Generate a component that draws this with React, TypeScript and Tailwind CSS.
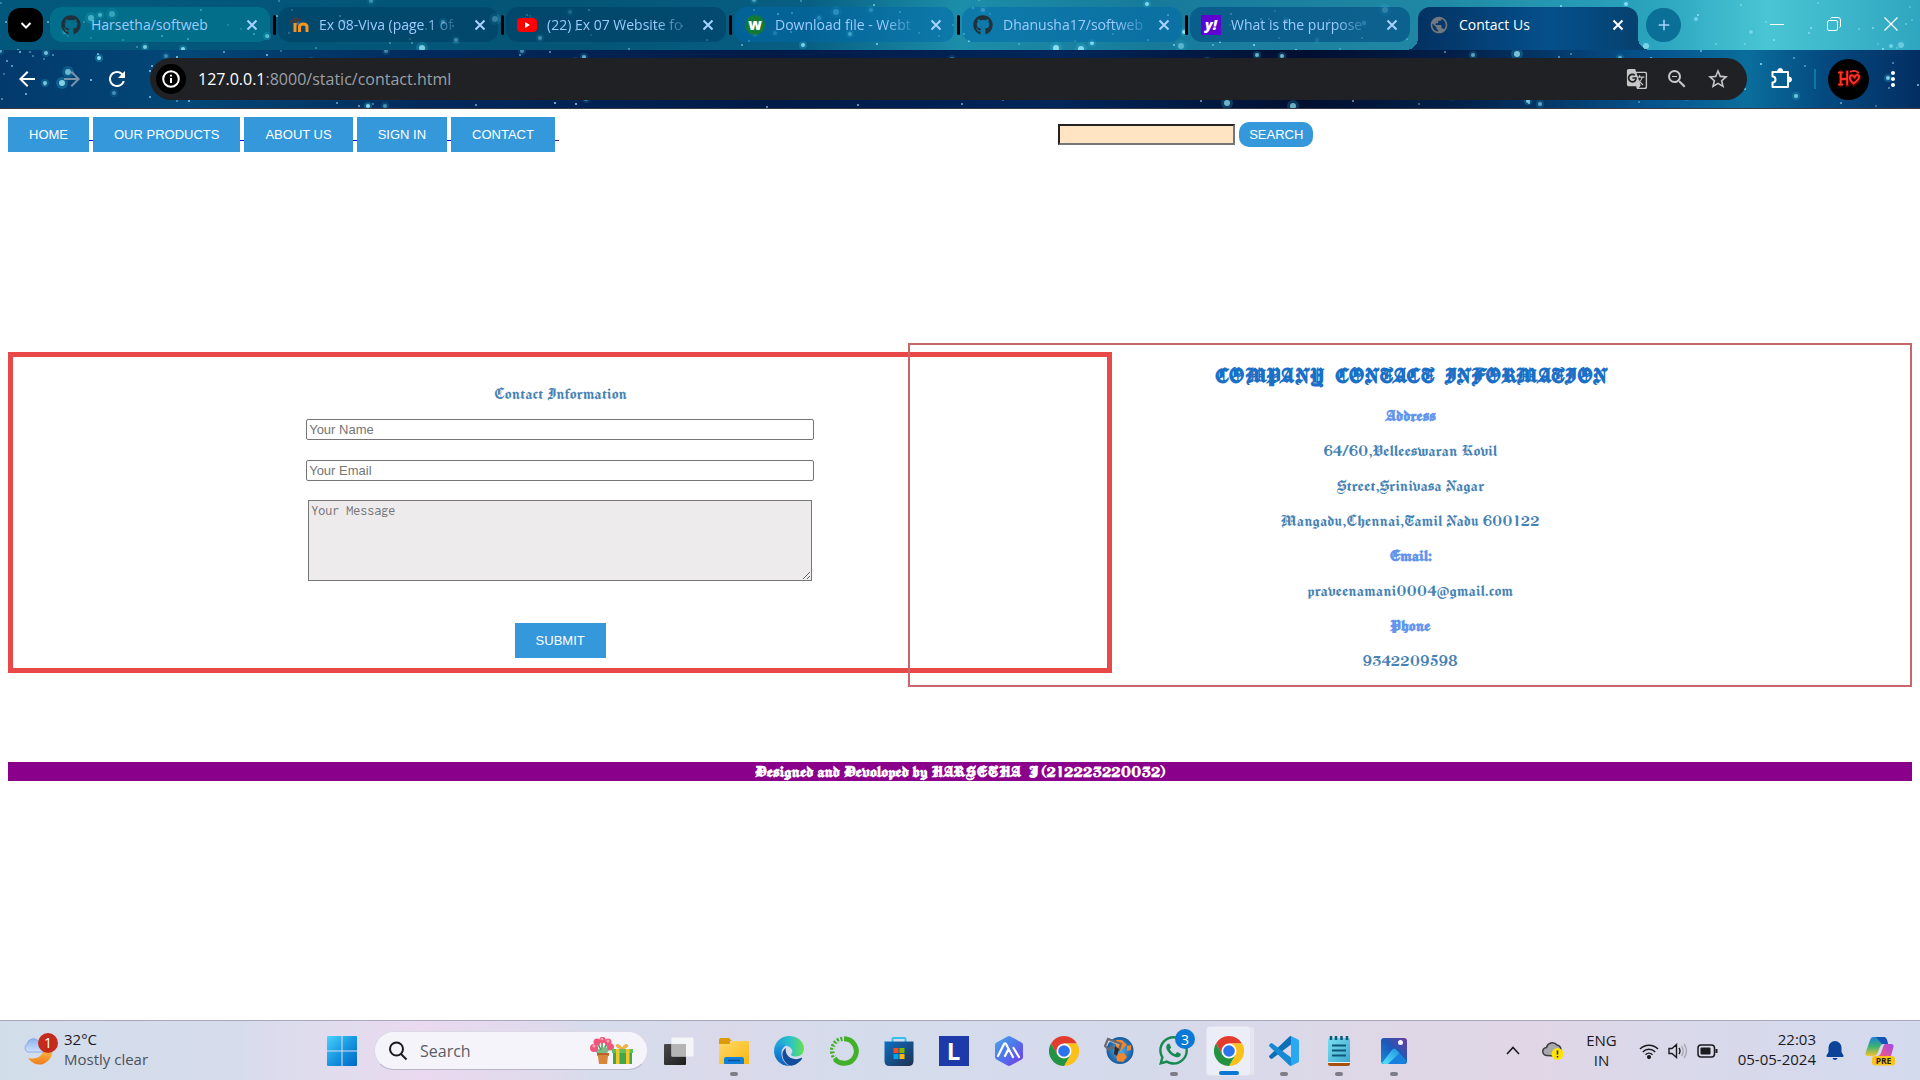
import type { ReactNode } from "react";
import { FaGithub, FaWhatsapp } from "react-icons/fa";
import {
  MdArrowBack,
  MdArrowForward,
  MdRefresh,
  MdAdd,
  MdPublic,
  MdGTranslate,
  MdZoomOut,
  MdStarBorder,
  MdMoreVert,
} from "react-icons/md";

type Star = { x: number; y: number; r: number; o: number };

function makeStars(seed: number, count: number, height: number): Star[] {
  let s = seed;
  const next = () => {
    s = (s * 1664525 + 1013904223) % 4294967296;
    return s / 4294967296;
  };
  return Array.from({ length: count }, () => {
    const big = next();
    return {
      x: Math.round(next() * 1920),
      y: Math.round(next() * height),
      r: big > 0.93 ? 3 : big > 0.7 ? 2 : 1,
      o: 0.35 + next() * 0.6,
    };
  });
}

const stripStars = makeStars(11, 150, 50);
const barStars = makeStars(29, 170, 58);

function Stars({ stars, height }: { stars: Star[]; height: number }) {
  return (
    <svg
      className="pointer-events-none absolute inset-0 h-full w-full"
      viewBox={`0 0 1920 ${height}`}
      preserveAspectRatio="xMidYMid slice"
      aria-hidden="true"
    >
      {stars.map((p, i) => (
        <g key={i}>
          {p.r > 1 && <circle cx={p.x} cy={p.y} r={p.r * 2} fill="#2fb4dc" opacity={p.o * 0.35} />}
          <circle cx={p.x} cy={p.y} r={p.r} fill="#9be8f5" opacity={p.o} />
        </g>
      ))}
    </svg>
  );
}

function CloseIcon() {
  return (
    <svg viewBox="0 0 18 18" className="size-[18px]" stroke="currentColor" strokeWidth="2">
      <path d="M4.500 4.500l9 9M13.500 4.500l-9 9" />
    </svg>
  );
}

function MoodleIcon() {
  return (
    <svg viewBox="0 0 20 20" className="size-5">
      <path d="M6 17V8M10.500 17v-5c0-4 7.500-4 7.500 0v5" fill="none" stroke="#f7931e" strokeWidth="3" />
      <path d="M0 6l7-4 6 2-5 4-6-.5z" fill="#3c3c46" />
      <path d="M1 6.500v5" stroke="#3c3c46" strokeWidth="1" />
    </svg>
  );
}

function YoutubeIcon() {
  return (
    <svg viewBox="0 0 20 20" className="size-5">
      <rect y="3" width="20" height="14" rx="4" fill="#f00" />
      <path d="M8 7l5 3-5 3z" fill="#fff" />
    </svg>
  );
}

function ExtensionIcon() {
  return (
    <svg viewBox="0 0 24 24" className="size-6" fill="none" stroke="currentColor" strokeWidth="2" strokeLinejoin="round">
      <path d="M3.500 5h15.500v15H3.500v-4.500c4 0 4-6 0-6z" />
      <path d="M8.700 4a2.500 2.500 0 0 1 5 0zM20 10a2.500 2.500 0 0 1 0 5z" fill="currentColor" strokeWidth="1" />
    </svg>
  );
}

function LetterIcon({ children, className }: { children: string; className: string }) {
  return <span className={`flex size-5 shrink-0 items-center justify-center font-extrabold leading-5 text-white ${className}`}>{children}</span>;
}

const tabs: { title: string; icon: ReactNode }[] = [
  { title: "Harsetha/softweb", icon: <FaGithub className="size-5 shrink-0 text-[#22303a]" /> },
  { title: "Ex 08-Viva (page 1 of", icon: <MoodleIcon /> },
  { title: "(22) Ex 07 Website fo", icon: <YoutubeIcon /> },
  { title: "Download file - Webt", icon: <LetterIcon className="rounded-full bg-[#127a36] pb-[2px] text-[15px]">w</LetterIcon> },
  { title: "Dhanusha17/softweb", icon: <FaGithub className="size-5 shrink-0 text-[#22303a]" /> },
  { title: "What is the purpose", icon: <LetterIcon className="bg-[#5f01d1] text-[14px] italic">y!</LetterIcon> },
];

function TabStrip() {
  return (
    <div className="relative flex h-[50px] items-start overflow-hidden bg-[linear-gradient(90deg,#02587c_0%,#045576_30%,#075f83_42%,#1c8eaa_50%,#177a9b_60%,#1f87a3_74%,#2aa3bd_86%,#49c5d4_92%,#2fa6bf_100%)] pl-2 pt-[7px]">
      <Stars stars={stripStars} height={50} />
      <button aria-label="Search tabs" className="relative mr-[7px] mt-px flex h-[34px] w-[35px] shrink-0 items-center justify-center rounded-xl bg-black text-white">
        <svg viewBox="0 0 12 12" className="size-3" fill="none" stroke="currentColor" strokeWidth="2">
          <path d="M1.500 4L6 8.500 10.500 4" />
        </svg>
      </button>
      {tabs.map((tab, i) => (
        <div key={tab.title} className="relative flex w-[228px] shrink items-center">
          <div className={`flex h-[35px] w-[220px] min-w-0 items-center rounded-xl pl-[11px] pr-[9px] ${i === 0 ? "bg-[#008a9e]/45" : i < 3 ? "bg-[#003a62]/50" : i < 5 ? "bg-[#0068ac]/50" : "bg-[#004a80]/60"}`}>
            {tab.icon}
            <span className={`ml-[10px] whitespace-nowrap text-[14px] text-[#9ccbff] ${i === 0 ? "" : "[mask-image:linear-gradient(90deg,#000_80%,#0004)]"}`}>
              {tab.title}
            </span>
            <button aria-label={`Close ${tab.title}`} className="ml-auto text-[#a8d2ff]">
              <CloseIcon />
            </button>
          </div>
          {i < 5 && <span className="ml-[3px] h-5 w-[3px] rounded-sm bg-black" />}
        </div>
      ))}
      <div className="relative flex h-[43px] w-[220px] shrink items-center rounded-t-xl bg-[linear-gradient(90deg,#033262_0%,#05508c_60%,#06416f_100%)] pb-2 pl-[11px] pr-[11px] text-white">
        <span className="absolute -left-3 bottom-0 size-3 bg-[radial-gradient(circle_at_0_0,transparent_12px,#033262_12px)]" />
        <span className="absolute -right-3 bottom-0 size-3 bg-[radial-gradient(circle_at_100%_0,transparent_12px,#06416f_12px)]" />
        <MdPublic className="size-[20px] text-[#73787e]" />
        <span className="ml-[10px] text-[14px]">Contact Us</span>
        <button aria-label="Close Contact Us" className="ml-auto">
          <CloseIcon />
        </button>
      </div>
      <button aria-label="New tab" className="relative ml-2 mt-px flex h-[34px] w-[35px] shrink-0 items-center justify-center rounded-full bg-[#0a7098] text-[#a8d2ff]">
        <MdAdd className="size-[18px]" />
      </button>
      <div className="relative ml-auto flex h-[34px] shrink-0 items-center gap-[43px] pr-[22px] text-white">
        <button aria-label="Minimize">
          <svg viewBox="0 0 14 14" className="size-[14px]" stroke="currentColor"><path d="M0 7.500h14" /></svg>
        </button>
        <button aria-label="Restore">
          <svg viewBox="0 0 14 14" className="size-[14px]" fill="none" stroke="currentColor">
            <rect x=".5" y="3.500" width="10" height="10" rx="1.500" />
            <path d="M3.500 1.500q.5-1 1.500-1h6q2.500 0 2.500 2.500v6q0 1-1 1.500" />
          </svg>
        </button>
        <button aria-label="Close window">
          <svg viewBox="0 0 14 14" className="size-[14px]" stroke="currentColor" strokeWidth="1.200"><path d="M.5.5l13 13M13.500.5l-13 13" /></svg>
        </button>
      </div>
    </div>
  );
}

function Toolbar() {
  return (
    <div className="relative flex h-[59px] items-center overflow-hidden border-b border-[#3b3b44] bg-[linear-gradient(90deg,#023a6c_0%,#024878_10%,#012a5c_22%,#011a48_40%,#01265a_55%,#010f30_68%,#02204a_76%,#06538d_86%,#0a6e9c_91%,#044a80_95%,#032e62_100%)] px-[15px]">
      <Stars stars={barStars} height={58} />
      <div className="relative flex items-center gap-[21px] text-white">
        <button aria-label="Back"><MdArrowBack className="size-6" /></button>
        <button aria-label="Forward" className="text-[#7a93ab]"><MdArrowForward className="size-6" /></button>
        <button aria-label="Reload"><MdRefresh className="size-6" /></button>
      </div>
      <div className="relative ml-[21px] flex h-[42px] flex-1 items-center rounded-full bg-[#202124] pl-[6px] pr-[17px]">
        <button aria-label="Site information" className="flex size-[30px] items-center justify-center rounded-full bg-black text-white">
          <svg viewBox="0 0 18 18" className="size-[18px]" fill="none" stroke="currentColor" strokeWidth="2">
            <circle cx="9" cy="9" r="7.800" />
            <path d="M9 8v5M9 4.800v1.800" />
          </svg>
        </button>
        <div className="ml-3 text-[16px] text-[#9aa0a6]">
          <span className="text-white">127.0.0.1</span>:8000/static/contact.html
        </div>
        <div className="ml-auto flex items-center gap-[17px] text-[#c7c7c7]">
          <button aria-label="Translate this page"><MdGTranslate className="size-[22px]" /></button>
          <button aria-label="Zoom"><MdZoomOut className="size-6" /></button>
          <button aria-label="Bookmark this tab"><MdStarBorder className="size-6" /></button>
        </div>
      </div>
      <button aria-label="Extensions" className="relative ml-[22px] text-white"><ExtensionIcon /></button>
      <span className="relative ml-[21px] h-[20px] w-[2px] bg-[#0b7ba0]" />
      <button aria-label="Profile" className="relative ml-3 flex size-[41px] items-center justify-center rounded-full bg-black">
        <svg viewBox="0 0 26 20" className="h-5 w-[24px]" fill="none" strokeLinecap="round">
          <g stroke="#a80000" strokeWidth="4" opacity=".6">
            <path d="M4 2v15M11 2v15M4 10h7" />
            <path d="M18 16c-8-8-2-13 1-8 4-6 9 0-1 8z" />
          </g>
          <g stroke="#ff3226" strokeWidth="2">
            <path d="M2 3h4M4 3v13M11 2v14M4 10h7M2 16h4" />
            <path d="M18 15c-8-7-2-12 1-7 4-6 9 0-1 7zM15 2q4-2 8 1" />
          </g>
        </svg>
      </button>
      <button aria-label="Menu" className="relative ml-3 text-white"><MdMoreVert className="size-6" /></button>
    </div>
  );
}

const navItems = ["HOME", "OUR PRODUCTS", "ABOUT US", "SIGN IN", "CONTACT"];

function SiteNav() {
  return (
    <div className="grid grid-cols-[55%_1fr] items-center font-['Liberation_Sans',sans-serif] text-[13px]">
      <nav className="flex">
        {navItems.map((label) => (
          <a key={label} href="#" className="flex items-center">
            <span className="flex h-[35px] items-center bg-[#3498db] px-[21px] text-white">{label}</span>
            <span className={`mt-[12px] h-px w-1 ${label === "CONTACT" ? "bg-[#551a8b]" : "bg-[#0000ee]"}`} />
          </a>
        ))}
      </nav>
      <form className="ml-[3px] flex items-center gap-1" onSubmit={(e) => e.preventDefault()}>
        <input aria-label="Search the site" className="h-[21px] w-[177px] border-2 border-b-[#767676] border-l-[#222] border-r-[#767676] border-t-[#222] bg-[#ffe4c4] px-[2px]" />
        <button className="h-[25px] rounded-[10px] bg-[#3498db] px-[10px] text-white">SEARCH</button>
      </form>
    </div>
  );
}

const contactLines = [
  { text: "Address", label: true },
  { text: "64/60,Velleeswaran Kovil", label: false },
  { text: "Street,Srinivasa Nagar", label: false },
  { text: "Mangadu,Chennai,Tamil Nadu 600122", label: false },
  { text: "Email:", label: true },
  { text: "praveenamani0004@gmail.com", label: false },
  { text: "Phone", label: true },
  { text: "9342209598", label: false },
];

function ContactPage() {
  const blackletter = "font-['Old_English_Text_MT','Manufacturing_Consent','UnifrakturMaguntia','Liberation_Serif',serif]";
  return (
    <main className="flex-1 bg-white px-2 pt-2">
      <SiteNav />
      <div className={`mt-[191px] flex items-start text-[18px] leading-5 ${blackletter}`}>
        <form
          className="mt-[9px] flex w-[58%] shrink-0 flex-col items-center border-[5px] border-[#e84848] pb-[10px] pt-[26px]"
          onSubmit={(e) => e.preventDefault()}
        >
          <p className="text-[#4682b4]">Contact Information</p>
          <input
            aria-label="Your Name"
            placeholder="Your Name"
            className="mt-4 h-[21px] w-[508px] rounded-[2px] border border-[#767676] px-[2px] font-['Liberation_Sans',sans-serif] text-[13px] placeholder:text-[#757575]"
          />
          <input
            aria-label="Your Email"
            placeholder="Your Email"
            className="mt-5 h-[21px] w-[508px] rounded-[2px] border border-[#767676] px-[2px] font-['Liberation_Sans',sans-serif] text-[13px] placeholder:text-[#757575]"
          />
          <textarea
            aria-label="Your Message"
            placeholder="Your Message"
            className="mt-[19px] h-[81px] w-[504px] resize border border-[#767676] bg-[#eeebec] p-[2px] font-['Inconsolata','Liberation_Mono',monospace] text-[14px] leading-4 placeholder:text-[#757575]"
          />
          <button className="mt-[42px] h-[35px] bg-[#3498db] px-[21px] font-['Liberation_Sans',sans-serif] text-[13px] text-white">SUBMIT</button>
        </form>
        <section className="pointer-events-none relative -ml-[204px] flex-1 border-2 border-[#c9666a] pb-[7px] pt-[20px] text-center text-[#4682b4]">
          <h2 className="mb-[11px] text-[24px] font-bold leading-[22px] text-[#1a70c6]">COMPANY CONTACT INFORMATION</h2>
          {contactLines.map((line) => (
            <p key={line.text} className={`leading-[35px] ${line.label ? "font-bold text-[#6495ed]" : ""}`}>
              {line.text}
            </p>
          ))}
        </section>
      </div>
      <footer className={`mt-[75px] bg-[#8b008b] text-center text-[18px] font-bold leading-[19px] text-white ${blackletter}`}>
        Designed and Devoloped by HARSETHA J (212223220032)
      </footer>
    </main>
  );
}

function WeatherIcon() {
  return (
    <svg viewBox="0 0 34 36" className="h-9 w-[34px]">
      <defs>
        <linearGradient id="moon" x1="0" y1="0" x2="0" y2="1"><stop offset="0" stopColor="#fcc34a" /><stop offset="1" stopColor="#f07c1c" /></linearGradient>
        <linearGradient id="cloud" x1="0" y1="0" x2="0" y2="1"><stop offset="0" stopColor="#8bb4ee" /><stop offset="1" stopColor="#cfe0fa" /></linearGradient>
      </defs>
      <path d="M28 16a13 13 0 0 1-24 9c9 2 15-2 16-10z" fill="url(#moon)" />
      <path d="M4 19a4.500 4.500 0 0 1-1-8 6.500 6.500 0 0 1 12-2q4 1 4 10z" fill="url(#cloud)" stroke="#7ba3e4" strokeWidth=".8" />
      <circle cx="24" cy="10" r="10" fill="#c42b1c" />
      <text x="24" y="15" textAnchor="middle" fontSize="14" fill="#fff">1</text>
    </svg>
  );
}

function StartIcon() {
  return (
    <svg viewBox="0 0 30 30" className="size-[30px]">
      <defs>
        <linearGradient id="win" x1="0" y1="0" x2="1" y2="1"><stop offset="0" stopColor="#4cd2ff" /><stop offset=".5" stopColor="#1697e0" /><stop offset="1" stopColor="#0067c8" /></linearGradient>
      </defs>
      <path d="M1 0h13.500v14.500H0V1q0-1 1-1zM15.500 0H29q1 0 1 1v13.500H15.500zM0 15.500h14.500V30H1q-1 0-1-1zM15.500 15.500H30V29q0 1-1 1H15.500z" fill="url(#win)" />
    </svg>
  );
}

function GiftIcon() {
  return (
    <svg viewBox="0 0 44 28" className="h-7 w-11">
      <path d="M8 16l-4-5M12 16V6M15 16l5-6M12 15L8 7M12 15l5-8" stroke="#3f9a4a" strokeWidth="1.500" fill="none" />
      <path d="M6 14q0-4 5-1 4-6 8 0l-2 3H8z" fill="#7fb98a" />
      <g fill="#f0567c">
        <circle cx="4" cy="11" r="4" /><circle cx="7" cy="5" r="3.500" /><circle cx="12.500" cy="3" r="3.200" /><circle cx="18" cy="5" r="3.500" /><circle cx="20.500" cy="10" r="3.500" />
      </g>
      <g fill="#f9a5b8"><circle cx="4" cy="9" r="1.500" /><circle cx="12" cy="2" r="1.300" /><circle cx="18" cy="4" r="1.500" /></g>
      <path d="M7 16h12v3h-1l-1 8H9l-1-8H7z" fill="#d9843b" />
      <path d="M7 16h12v2H7z" fill="#b9652a" />
      <path d="M23 14h19v13H23z" fill="#3fa64e" />
      <path d="M22 12h21v4H22z" fill="#5cc261" />
      <path d="M26 12h3.500v15H26zM36 12h3.500v15H36z" fill="#f3c528" />
      <path d="M32 12c-7-1-7-5-4-4.500q3 .5 4 4.500 1-4 4-4.500c3-.5 3 3.500-4 4.500z" fill="#f6b73c" stroke="#d9952a" strokeWidth=".6" />
    </svg>
  );
}

function TaskViewIcon() {
  return (
    <svg viewBox="0 0 30 30" className="size-[30px]">
      <defs>
        <linearGradient id="tv" x1="0" y1="0" x2="1" y2="1"><stop offset="0" stopColor="#4b4b4b" /><stop offset="1" stopColor="#1d1d1d" /></linearGradient>
      </defs>
      <rect y="8" width="22" height="21" rx="1" fill="url(#tv)" />
      <rect x="7.500" y="1.500" width="22" height="19" rx="1" fill="#f7f7f7" opacity=".9" />
      <path d="M7.500 8H22v12.500H7.500z" fill="#b5b5b5" />
    </svg>
  );
}

function ExplorerIcon() {
  return (
    <svg viewBox="0 0 30 30" className="size-[30px]">
      <defs>
        <linearGradient id="fold" x1="0" y1="0" x2="1" y2="1"><stop offset="0" stopColor="#ffd86b" /><stop offset="1" stopColor="#fbb80f" /></linearGradient>
      </defs>
      <path d="M0 8V4q0-2 2-2h8l3 3h-2v5z" fill="#dd9a05" />
      <path d="M0 8h10l3-3h16q1 0 1 1v22H0z" fill="url(#fold)" />
      <path d="M5 28v-5q0-2 2-2h16q2 0 2 2v5z" fill="#1180d8" />
      <path d="M9 24.500h12" stroke="#08519a" strokeWidth="1.500" />
    </svg>
  );
}

function EdgeIcon() {
  return (
    <svg viewBox="0 0 30 30" className="size-[30px]">
      <defs>
        <linearGradient id="ea" x1="0" y1=".5" x2="1" y2=".5"><stop offset="0" stopColor="#1c9ad8" /><stop offset=".55" stopColor="#2cc3c8" /><stop offset="1" stopColor="#66e24c" /></linearGradient>
        <linearGradient id="eb" x1="0" y1="0" x2="0" y2="1"><stop offset="0" stopColor="#1b9de2" /><stop offset="1" stopColor="#0b5fbd" /></linearGradient>
      </defs>
      <path d="M0 14C1 5 8 0 15 0c9 0 15 6 15 12.500 0 5-3.500 8-8 8-4 0-5.500-1.500-5-2.500 1.500-1.500 1.500-2.500 1.200-3.500C17 9 5 7 0 14z" fill="url(#ea)" />
      <path d="M0 15C1 9 8 7 12 9.500c-3 1.500-5 5-4.500 9C8 25 13 30 17 29.900 8 31 0 24 0 15z" fill="url(#eb)" />
      <path d="M12 12c-3 2-4 4.500-3.500 8 1 6 6 10 9 9.700 5-.7 8.500-4 10.500-7 .4-.8-.3-1-1-.7-3 1.500-7 1.500-10 0-4-2-6-6-5-10z" fill="#114d9c" />
    </svg>
  );
}

function AnacondaIcon() {
  return (
    <svg viewBox="0 0 30 30" className="size-[30px]" fill="none" stroke="#43b02a">
      <path d="M15 2.700a12.300 12.300 0 1 1-9 20.700" strokeWidth="5" />
      <path d="M7 23.500A12 12 0 0 1 14 2.800" strokeWidth="4.500" strokeDasharray="2 1.500" />
      <path d="M6 20A10.500 10.500 0 0 1 12 5" strokeWidth="1.500" stroke="#d7dbec" strokeDasharray="3 2" />
    </svg>
  );
}

function StoreIcon() {
  return (
    <svg viewBox="0 0 30 30" className="size-[30px]">
      <defs>
        <linearGradient id="st" x1="0" y1="0" x2="1" y2="1"><stop offset="0" stopColor="#0d70c4" /><stop offset="1" stopColor="#203050" /></linearGradient>
      </defs>
      <path d="M8.500 6V3q0-1 1-1h11q1 0 1 1v3" fill="none" stroke="#38bdf0" strokeWidth="2" />
      <path d="M.5 5.500h29V25q0 5-5 5h-19q-5 0-5-5z" fill="url(#st)" />
      <path d="M9.500 12h5v5h-5z" fill="#f25022" /><path d="M15.500 12h5v5h-5z" fill="#7fba00" />
      <path d="M9.500 18h5v5h-5z" fill="#00a4ef" /><path d="M15.500 18h5v5h-5z" fill="#ffb900" />
    </svg>
  );
}

function LensIcon() {
  return <span className="flex size-[30px] items-center justify-center bg-[#1c3aa9] text-[24px] font-bold text-white">L</span>;
}

function HexIcon() {
  return (
    <svg viewBox="0 0 30 30" className="size-[30px]">
      <defs>
        <linearGradient id="hx" x1="0" y1="0" x2="1" y2="1"><stop offset="0" stopColor="#4ca8ea" /><stop offset=".5" stopColor="#4f74ea" /><stop offset="1" stopColor="#7a35ea" /></linearGradient>
      </defs>
      <path d="M13.500.5q1.500-.8 3 0l11 6q1.500.8 1.500 2.500v12q0 1.700-1.500 2.500l-11 6q-1.500.8-3 0l-11-6Q1 22.700 1 21V9q0-1.700 1.500-2.500z" fill="url(#hx)" />
      <path d="M4 20l6-12q1-1.500 2 0l7 13M11 20l3-6M19.500 12l5.500 9" fill="none" stroke="#fff" strokeWidth="2.200" strokeLinecap="round" />
    </svg>
  );
}

function ChromeIcon() {
  return (
    <svg viewBox="0 0 30 30" className="size-[30px]">
      <path d="M15 0A15 15 0 0 0 2 7.500L8.500 19 15 7.500h13A15 15 0 0 0 15 0z" fill="#e33b2e" />
      <path d="M28 7.500A15 15 0 0 1 15 30l6.500-11.200L15 7.500z" fill="#fbc116" />
      <path d="M2 7.500A15 15 0 0 0 15 30l6.500-11.200L8.500 18.800z" fill="#229342" />
      <circle cx="15" cy="15" r="7.500" fill="#fff" />
      <circle cx="15" cy="15" r="5.800" fill="#2a74ec" />
    </svg>
  );
}

function GlobeToolIcon() {
  return (
    <svg viewBox="0 0 30 30" className="size-[30px]">
      <defs>
        <radialGradient id="gl"><stop offset="0" stopColor="#58b0e8" /><stop offset="1" stopColor="#155a9e" /></radialGradient>
      </defs>
      <circle cx="16" cy="14.500" r="13.500" fill="url(#gl)" />
      <path d="M12 4l6 0 5 5-4 3-2 3-5-4zM12 18l8-1 3 4-4 5-6-1zM23 10l4-1v5l-4 1z" fill="#f0872c" />
      <path d="M1 10l3-7 13 5-2 6-8-3-2 3z" fill="none" stroke="#6a6a70" strokeWidth="2.200" />
      <path d="M11 10l4 3-2 7-3-2z" fill="#2d2d30" />
      <path d="M5 5l10 4" stroke="#bbb" />
    </svg>
  );
}

function WhatsappIcon() {
  return (
    <span className="relative">
      <FaWhatsapp className="size-[33px] text-[#168a50]" />
      <span className="absolute -right-[5px] -top-[5px] flex size-5 items-center justify-center rounded-full bg-[#0a78d4] text-[14px] text-white">3</span>
    </span>
  );
}

function CodeIcon() {
  return (
    <svg viewBox="0 0 30 30" className="size-[30px]">
      <path d="M22 0l7 3.500q1 .5 1 1.500v20q0 1-1 1.500L22 30z" fill="#2aa9f2" />
      <path d="M22 0v8.500L3.500 22.500q-1 .8-2 0L.5 21.500q-1-1 0-2L20 1q1-1 2-1z" fill="#0b6fb8" />
      <path d="M22 30v-8.500L3.500 7.500q-1-.8-2 0L.5 8.500q-1 1 0 2L20 29q1 1 2 1z" fill="#1689d2" />
    </svg>
  );
}

function NotepadIcon() {
  return (
    <svg viewBox="0 0 30 30" className="size-[30px]">
      <defs>
        <linearGradient id="np" x1="0" y1="0" x2="1" y2="1"><stop offset="0" stopColor="#78e0f2" /><stop offset="1" stopColor="#3fa6cc" /></linearGradient>
      </defs>
      <path d="M4 25h22v3q0 2-2 2H6q-2 0-2-2z" fill="#a6510f" />
      <path d="M4 24h22v3H4z" fill="#eef2f4" />
      <path d="M4 4q0-2 2-2h18q2 0 2 2v22H4z" fill="url(#np)" />
      <path d="M7 0v4M12 0v4M17.500 0v4M23 0v4" stroke="#0d5878" strokeWidth="2.500" />
      <path d="M8 9.500h14M8 14.500h14M8 19.500h14" stroke="#0d5878" strokeWidth="2" />
    </svg>
  );
}

function PhotosIcon() {
  return (
    <svg viewBox="0 0 30 30" className="size-[30px]">
      <defs>
        <linearGradient id="ph" x1="0" y1="1" x2="1" y2="0"><stop offset="0" stopColor="#1390e0" /><stop offset=".5" stopColor="#1d58b8" /><stop offset="1" stopColor="#6a3f9c" /></linearGradient>
        <linearGradient id="pm" x1="0" y1="1" x2="1" y2="0"><stop offset="0" stopColor="#5ce4ff" /><stop offset="1" stopColor="#1b92e0" /></linearGradient>
      </defs>
      <rect x="2" y="2" width="26" height="26" rx="3" fill="url(#ph)" />
      <path d="M3 26l10-12q2-2.500 4.500 0L28 25q0 3-3 3H5q-2 0-2-2z" fill="#1780dc" />
      <path d="M3 27l10-13q2-2.500 4.500 0l3 3L9 28H5z" fill="url(#pm)" />
      <circle cx="21.500" cy="6.500" r="2.500" fill="#f4f4ff" />
    </svg>
  );
}

const taskbarApps: { name: string; icon: ReactNode; state: "idle" | "running" | "active" }[] = [
  { name: "Task View", icon: <TaskViewIcon />, state: "idle" },
  { name: "File Explorer", icon: <ExplorerIcon />, state: "running" },
  { name: "Microsoft Edge", icon: <EdgeIcon />, state: "idle" },
  { name: "Anaconda Navigator", icon: <AnacondaIcon />, state: "idle" },
  { name: "Microsoft Store", icon: <StoreIcon />, state: "idle" },
  { name: "Lenovo", icon: <LensIcon />, state: "idle" },
  { name: "AI Assistant", icon: <HexIcon />, state: "idle" },
  { name: "Google Chrome", icon: <ChromeIcon />, state: "idle" },
  { name: "Globe tools", icon: <GlobeToolIcon />, state: "idle" },
  { name: "WhatsApp", icon: <WhatsappIcon />, state: "running" },
  { name: "Chrome window", icon: <ChromeIcon />, state: "active" },
  { name: "Visual Studio Code", icon: <CodeIcon />, state: "running" },
  { name: "Notepad", icon: <NotepadIcon />, state: "running" },
  { name: "Photos", icon: <PhotosIcon />, state: "running" },
];

function Taskbar() {
  return (
    <div className="flex h-[60px] items-center border-t border-[#a9a9bb] bg-[linear-gradient(90deg,#d2ddea_0%,#d6dcec_12%,#e0dcee_17%,#ead9f0_22%,#dedaec_29%,#d5dcec_31%,#dad9ea_38%,#d4dcec_45%,#d5daeb_60%,#dfd7e6_73%,#e0d6e6_80%,#d8d9ea_88%,#d4daee_100%)] text-[15px] text-[#1b1b1f]">
      <button className="ml-6 flex w-[303px] items-center text-left">
        <WeatherIcon />
        <span className="ml-[6px] pb-[3px] leading-5">
          <span className="block">32°C</span>
          <span className="block text-[#4e5058]">Mostly clear</span>
        </span>
      </button>
      <button aria-label="Start"><StartIcon /></button>
      <label className="ml-[17px] flex h-[39px] w-[274px] items-center rounded-full border border-b-[#b9b5c8] border-l-[#dcd8e6] border-r-[#dcd8e6] border-t-[#dcd8e6] bg-[#f5f4fa] px-[13px]">
        <svg viewBox="0 0 20 20" className="size-5 shrink-0" fill="none" stroke="#1b1b1f" strokeWidth="2">
          <circle cx="8.500" cy="8" r="6.500" /><path d="M13 13l5.500 5.500" />
        </svg>
        <input placeholder="Search" aria-label="Search" className="ml-3 w-0 flex-1 bg-transparent text-[16px] placeholder:text-[#5c5c66]" />
        <GiftIcon />
      </label>
      <div className="ml-[3px] flex">
        {taskbarApps.map((app) => (
          <button key={app.name} aria-label={app.name} className="flex w-[55px] justify-center">
            <span
              className={`relative flex h-[50px] w-[45px] items-center justify-center rounded ${
                app.state === "active" ? "border border-[#e4e2ee] bg-[#eceef7] shadow-[4px_0_0_-1px_#e6e4ef]" : ""
              }`}
            >
              {app.icon}
              {app.state === "running" && <span className="absolute bottom-0 h-1 w-2 rounded-full bg-[#7d7d87]" />}
              {app.state === "active" && <span className="absolute bottom-0 h-1 w-5 rounded-full bg-[#0a78d4]" />}
            </span>
          </button>
        ))}
      </div>
      <div className="ml-auto flex items-center pr-[25px]">
        <button aria-label="Show hidden icons">
          <svg viewBox="0 0 14 9" className="h-[9px] w-[14px]" fill="none" stroke="currentColor" strokeWidth="1.600"><path d="M1 8l6-6.500L13 8" /></svg>
        </button>
        <svg viewBox="0 0 22 20" className="ml-[22px] h-5 w-[22px]">
          <path d="M5 14.500a4 4 0 0 1-.5-8A6 6 0 0 1 15 4q4 1 4 5l-7 6z" fill="#a9a9ad" stroke="#3c3c40" strokeWidth="1.500" />
          <circle cx="15.500" cy="13" r="6" fill="#fde300" />
          <path d="M15.500 9.500v4M15.500 15v1.500" stroke="#222" strokeWidth="1.500" />
        </svg>
        <button className="ml-[22px] pb-[2px] text-center leading-5">ENG<br />IN</button>
        <button aria-label="Network, volume and battery" className="ml-[22px] flex items-center gap-[9px]">
          <svg viewBox="0 0 20 16" className="h-4 w-5" fill="none" stroke="currentColor" strokeWidth="1.500">
            <path d="M1 6a12.500 12.500 0 0 1 18 0M3.800 9a8.500 8.500 0 0 1 12.400 0M6.500 11.700a5 5 0 0 1 7 0" /><circle cx="10" cy="14" r="1.300" fill="currentColor" />
          </svg>
          <svg viewBox="0 0 20 16" className="h-4 w-5" fill="none" stroke="currentColor" strokeWidth="1.400">
            <path d="M1 5.500h3L8.500 1.500v13L4 10.500H1zM11 5q2 3 0 6" /><path d="M13.500 3q3.500 5 0 10M16 1q5 7 0 14" stroke="#a9a9b5" />
          </svg>
          <svg viewBox="0 0 21 14" className="h-[14px] w-[21px]" fill="none" stroke="currentColor" strokeWidth="1.500">
            <rect x="1" y="1" width="16.500" height="12" rx="3" /><rect x="3.500" y="3.500" width="10" height="7" rx="1" fill="currentColor" stroke="none" /><path d="M19.500 5v4" strokeWidth="2" />
          </svg>
        </button>
        <button className="ml-5 pb-[3px] text-right leading-5">22:03<br />05-05-2024</button>
        <svg viewBox="0 0 18 20" className="ml-[10px] h-5 w-[18px]" fill="#0a4398">
          <path d="M9 0a6.500 6.500 0 0 1 6.500 6.500V11l2 3.500q.3 1.500-1 1.500h-15q-1.300 0-1-1.500l2-3.500V6.500A6.500 6.500 0 0 1 9 0zM6.500 17h5q-.5 2-2.500 2t-2.500-2z" />
        </svg>
        <svg viewBox="0 0 30 30" className="ml-[21px] size-[30px]">
          <defs>
            <linearGradient id="ca" x1="0" y1="0" x2="0" y2="1"><stop offset="0" stopColor="#1a7fd8" /><stop offset=".5" stopColor="#3cb371" /><stop offset="1" stopColor="#f4c430" /></linearGradient>
            <linearGradient id="cb" x1="0" y1="1" x2="1" y2="0"><stop offset="0" stopColor="#f7587a" /><stop offset="1" stopColor="#a14be8" /></linearGradient>
          </defs>
          <path d="M8 1h11q2 0 3 3l1 4h-4q-3 0-4 3l-3 7q-1 2-3 2H3q-3 0-2.500-3L5 4q1-3 3-3z" fill="url(#ca)" />
          <path d="M11 1h8q2 0 3 3l1 4h-6z" fill="#1553b8" />
          <path d="M20 8h6q3 0 2.500 3L26 20H13q2 0 3-3l2-6q1-3 2-3z" fill="url(#cb)" />
          <rect x="7" y="20" width="23" height="9.500" rx="3" fill="#fcc419" />
          <text x="18.500" y="28" textAnchor="middle" fontSize="8.500" fontWeight="700" fill="#222">PRE</text>
        </svg>
      </div>
    </div>
  );
}

export default function App() {
  return (
    <div className="flex min-h-screen flex-col bg-white font-['Segoe_UI','Open_Sans',sans-serif]">
      <header>
        <TabStrip />
        <Toolbar />
      </header>
      <ContactPage />
      <Taskbar />
    </div>
  );
}
